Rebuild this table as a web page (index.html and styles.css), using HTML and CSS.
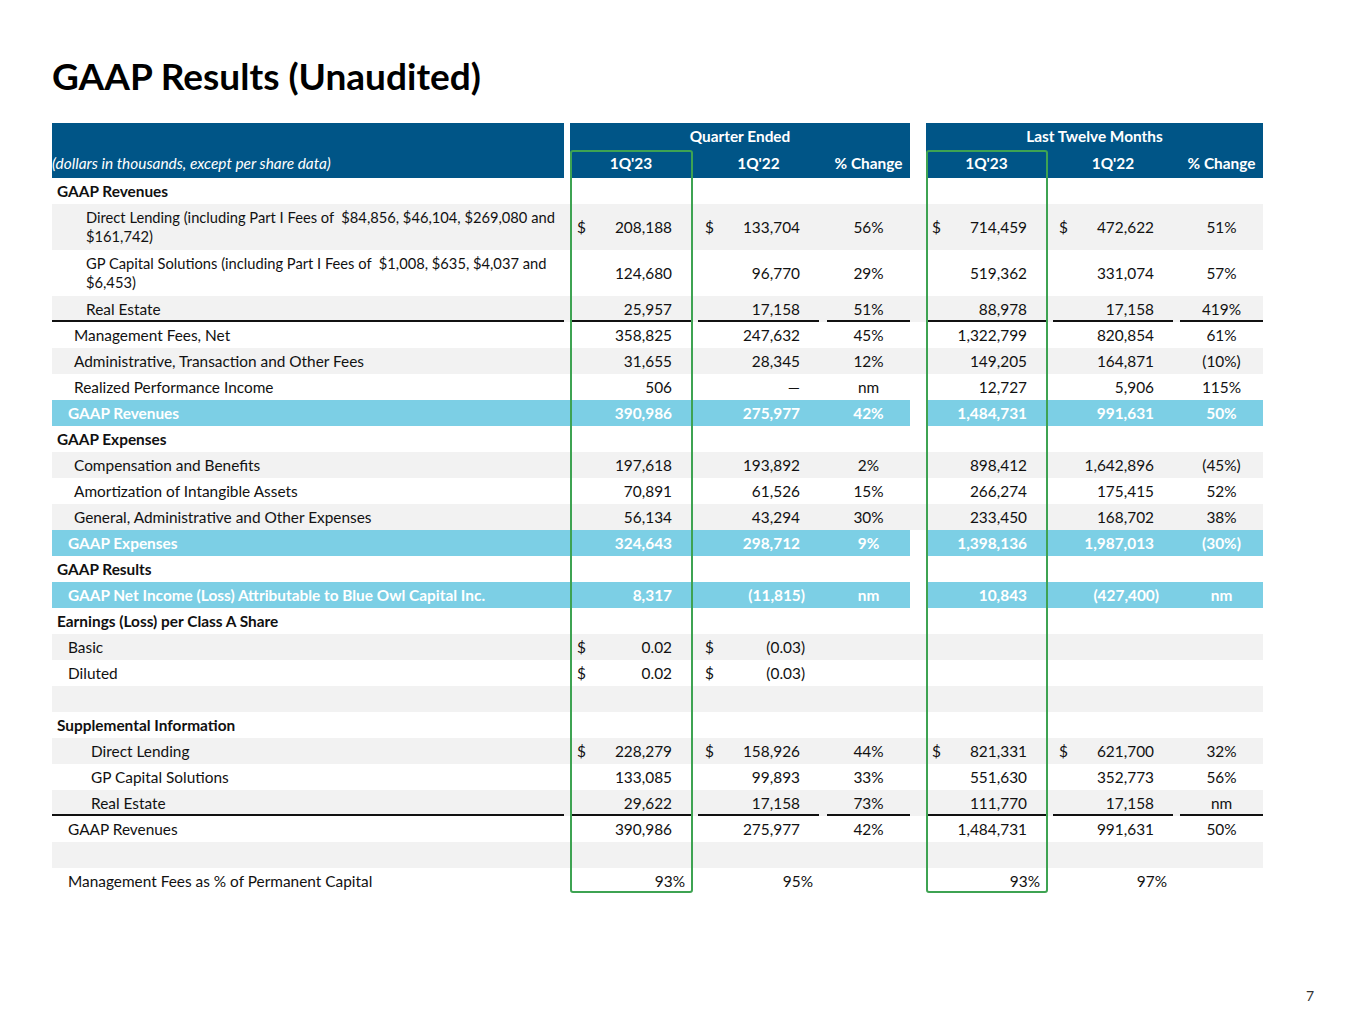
FILE: index.html
```html
<!DOCTYPE html>
<html lang="en">
<head>
<meta charset="utf-8">
<title>GAAP Results (Unaudited)</title>
<link rel="stylesheet" href="styles.css">
</head>
<body>
<div class="page">
  <h1 class="title">GAAP Results (Unaudited)</h1>

  <div class="tbl">
    <div class="head">
      <div class="h-lab">(dollars in thousands, except per share data)</div>
      <div class="h-grp q"></div>
      <div class="h-grp l"></div>
      <div class="h-title q">Quarter Ended</div>
      <div class="h-title l">Last Twelve Months</div>
      <div class="h-col a">1Q'23</div>
      <div class="h-col b">1Q'22</div>
      <div class="h-col c">% Change</div>
      <div class="h-col d">1Q'23</div>
      <div class="h-col e">1Q'22</div>
      <div class="h-col f">% Change</div>
    </div>

    <div class="row"><div class="lab sec">GAAP Revenues</div></div>

    <div class="row grey dbl">
      <div class="lab l2">Direct Lending (including Part I Fees of&nbsp; $84,856, $46,104, $269,080 and<br>$161,742)</div>
      <div class="v a"><span class="cur">$</span><span>208,188</span></div>
      <div class="v b"><span class="cur">$</span><span>133,704</span></div>
      <div class="v c">56%</div>
      <div class="v d"><span class="cur">$</span><span>714,459</span></div>
      <div class="v e"><span class="cur">$</span><span>472,622</span></div>
      <div class="v f">51%</div>
    </div>

    <div class="row dbl">
      <div class="lab l2">GP Capital Solutions (including Part I Fees of&nbsp; $1,008, $635, $4,037 and<br>$6,453)</div>
      <div class="v a"><span>124,680</span></div>
      <div class="v b"><span>96,770</span></div>
      <div class="v c">29%</div>
      <div class="v d"><span>519,362</span></div>
      <div class="v e"><span>331,074</span></div>
      <div class="v f">57%</div>
    </div>

    <div class="row grey ul">
      <div class="lab l2">Real Estate</div>
      <div class="v a"><span>25,957</span></div>
      <div class="v b"><span>17,158</span></div>
      <div class="v c">51%</div>
      <div class="v d"><span>88,978</span></div>
      <div class="v e"><span>17,158</span></div>
      <div class="v f">419%</div>
    </div>

    <div class="row">
      <div class="lab l1">Management Fees, Net</div>
      <div class="v a"><span>358,825</span></div>
      <div class="v b"><span>247,632</span></div>
      <div class="v c">45%</div>
      <div class="v d"><span>1,322,799</span></div>
      <div class="v e"><span>820,854</span></div>
      <div class="v f">61%</div>
    </div>

    <div class="row grey">
      <div class="lab l1">Administrative, Transaction and Other Fees</div>
      <div class="v a"><span>31,655</span></div>
      <div class="v b"><span>28,345</span></div>
      <div class="v c">12%</div>
      <div class="v d"><span>149,205</span></div>
      <div class="v e"><span>164,871</span></div>
      <div class="v f">(10%)</div>
    </div>

    <div class="row">
      <div class="lab l1">Realized Performance Income</div>
      <div class="v a"><span>506</span></div>
      <div class="v b"><span>—</span></div>
      <div class="v c">nm</div>
      <div class="v d"><span>12,727</span></div>
      <div class="v e"><span>5,906</span></div>
      <div class="v f">115%</div>
    </div>

    <div class="row hl">
      <div class="lab hi">GAAP Revenues</div>
      <div class="v a"><span>390,986</span></div>
      <div class="v b"><span>275,977</span></div>
      <div class="v c">42%</div>
      <div class="v d"><span>1,484,731</span></div>
      <div class="v e"><span>991,631</span></div>
      <div class="v f">50%</div>
    </div>

    <div class="row"><div class="lab sec">GAAP Expenses</div></div>

    <div class="row grey">
      <div class="lab l1">Compensation and Benefits</div>
      <div class="v a"><span>197,618</span></div>
      <div class="v b"><span>193,892</span></div>
      <div class="v c">2%</div>
      <div class="v d"><span>898,412</span></div>
      <div class="v e"><span>1,642,896</span></div>
      <div class="v f">(45%)</div>
    </div>

    <div class="row">
      <div class="lab l1">Amortization of Intangible Assets</div>
      <div class="v a"><span>70,891</span></div>
      <div class="v b"><span>61,526</span></div>
      <div class="v c">15%</div>
      <div class="v d"><span>266,274</span></div>
      <div class="v e"><span>175,415</span></div>
      <div class="v f">52%</div>
    </div>

    <div class="row grey">
      <div class="lab l1">General, Administrative and Other Expenses</div>
      <div class="v a"><span>56,134</span></div>
      <div class="v b"><span>43,294</span></div>
      <div class="v c">30%</div>
      <div class="v d"><span>233,450</span></div>
      <div class="v e"><span>168,702</span></div>
      <div class="v f">38%</div>
    </div>

    <div class="row hl">
      <div class="lab hi">GAAP Expenses</div>
      <div class="v a"><span>324,643</span></div>
      <div class="v b"><span>298,712</span></div>
      <div class="v c">9%</div>
      <div class="v d"><span>1,398,136</span></div>
      <div class="v e"><span>1,987,013</span></div>
      <div class="v f">(30%)</div>
    </div>

    <div class="row"><div class="lab sec">GAAP Results</div></div>

    <div class="row hl">
      <div class="lab hi">GAAP Net Income (Loss) Attributable to Blue Owl Capital Inc.</div>
      <div class="v a"><span>8,317</span></div>
      <div class="v b"><span class="neg">(11,815)</span></div>
      <div class="v c">nm</div>
      <div class="v d"><span>10,843</span></div>
      <div class="v e"><span class="neg">(427,400)</span></div>
      <div class="v f">nm</div>
    </div>

    <div class="row"><div class="lab sec">Earnings (Loss) per Class A Share</div></div>

    <div class="row grey">
      <div class="lab l0">Basic</div>
      <div class="v a"><span class="cur">$</span><span>0.02</span></div>
      <div class="v b"><span class="cur">$</span><span class="neg">(0.03)</span></div>
    </div>

    <div class="row">
      <div class="lab l0">Diluted</div>
      <div class="v a"><span class="cur">$</span><span>0.02</span></div>
      <div class="v b"><span class="cur">$</span><span class="neg">(0.03)</span></div>
    </div>

    <div class="row grey"></div>

    <div class="row"><div class="lab sec">Supplemental Information</div></div>

    <div class="row grey">
      <div class="lab l3">Direct Lending</div>
      <div class="v a"><span class="cur">$</span><span>228,279</span></div>
      <div class="v b"><span class="cur">$</span><span>158,926</span></div>
      <div class="v c">44%</div>
      <div class="v d"><span class="cur">$</span><span>821,331</span></div>
      <div class="v e"><span class="cur">$</span><span>621,700</span></div>
      <div class="v f">32%</div>
    </div>

    <div class="row">
      <div class="lab l3">GP Capital Solutions</div>
      <div class="v a"><span>133,085</span></div>
      <div class="v b"><span>99,893</span></div>
      <div class="v c">33%</div>
      <div class="v d"><span>551,630</span></div>
      <div class="v e"><span>352,773</span></div>
      <div class="v f">56%</div>
    </div>

    <div class="row grey ul">
      <div class="lab l3">Real Estate</div>
      <div class="v a"><span>29,622</span></div>
      <div class="v b"><span>17,158</span></div>
      <div class="v c">73%</div>
      <div class="v d"><span>111,770</span></div>
      <div class="v e"><span>17,158</span></div>
      <div class="v f">nm</div>
    </div>

    <div class="row">
      <div class="lab l0">GAAP Revenues</div>
      <div class="v a"><span>390,986</span></div>
      <div class="v b"><span>275,977</span></div>
      <div class="v c">42%</div>
      <div class="v d"><span>1,484,731</span></div>
      <div class="v e"><span>991,631</span></div>
      <div class="v f">50%</div>
    </div>

    <div class="row grey"></div>

    <div class="row pct">
      <div class="lab l0">Management Fees as % of Permanent Capital</div>
      <div class="v a"><span>93%</span></div>
      <div class="v b"><span>95%</span></div>
      <div class="v d"><span>93%</span></div>
      <div class="v e"><span>97%</span></div>
    </div>

    <div class="box box-q"></div>
    <div class="box box-l"></div>
  </div>

  <div class="footer">7</div>
</div>
</body>
</html>
```

FILE: styles.css
```css
* { box-sizing: border-box; }

html, body {
  margin: 0;
  padding: 0;
  background: #fff;
}

body {
  font-family: Lato, "Liberation Sans", sans-serif;
  font-size: 15.4px;
  color: #111;
}

.page {
  width: 1365px;
  height: 1024px;
  padding: 0 0 0 52px;
  display: flex;
  flex-direction: column;
}

.title {
  margin: 53px 0 0 0;
  font-size: 37px;
  line-height: 45px;
  font-weight: 700;
  color: #000;
}

.tbl {
  position: relative;
  width: 1211px;
  margin-top: 25px;
}

.head,
.row {
  display: grid;
  grid-template-columns: 512px 6px 122px 6px 121px 8px 83px 16px 121px 6px 120px 7px 83px;
}

.head {
  grid-template-rows: 27px 28px;
  color: #fff;
  font-weight: 700;
}

.h-lab {
  grid-column: 1;
  grid-row: 1 / 3;
  background: #005587;
  font-style: italic;
  font-weight: 400;
  display: flex;
  align-items: flex-end;
  padding: 0 0 6px 0;
  line-height: 18px;
}

.h-grp {
  grid-row: 1 / 3;
  background: #005587;
}
.h-grp.q { grid-column: 3 / 8; }
.h-grp.l { grid-column: 9 / 14; }

.h-title {
  grid-row: 1;
  text-align: center;
  line-height: 27px;
}
.h-title.q { grid-column: 3 / 8; }
.h-title.l { grid-column: 9 / 14; }

.h-col {
  grid-row: 2;
  text-align: center;
  line-height: 27px;
}

.a { grid-column: 3; }
.b { grid-column: 5; }
.c { grid-column: 7; }
.d { grid-column: 9; }
.e { grid-column: 11; }
.f { grid-column: 13; }

.row {
  height: 26px;
  align-items: center;
  line-height: 19px;
}
.row.dbl { height: 46px; }
.row.dbl .lab { font-size: 14.7px; }
.row.grey { background: #f2f2f2; }
.row.hl {
  background: linear-gradient(to right, #7ccfe5 0, #7ccfe5 858px, #fff 858px, #fff 874px, #7ccfe5 874px, #7ccfe5 100%);
  color: #fff;
  font-weight: 700;
}

.lab {
  grid-column: 1;
  white-space: nowrap;
}
.lab.sec { padding-left: 5px; font-weight: 700; }
.lab.hi { padding-left: 16px; }
.lab.l0 { padding-left: 16px; }
.lab.l1 { padding-left: 22px; }
.lab.l2 { padding-left: 34px; }
.lab.l3 { padding-left: 39px; }

.v {
  display: flex;
  justify-content: flex-end;
  align-self: stretch;
  align-items: center;
  padding-left: 7px;
  padding-right: 20px;
  white-space: nowrap;
}
.v.b, .v.e { padding-right: 19px; }
.v.d, .v.e { padding-left: 6px; }
.v.c, .v.f {
  justify-content: center;
  padding: 0;
}
.cur { margin-right: auto; }
.neg { margin-right: -5px; }

.row.pct .v { padding-right: 7px; }
.row.pct .v.b, .row.pct .v.e { padding-right: 6px; }

.row.ul .lab,
.row.ul .v {
  align-self: stretch;
  display: flex;
  align-items: center;
  box-shadow: inset 0 -2px 0 #111;
}

.box {
  position: absolute;
  top: 27px;
  height: 743px;
  border: 2px solid #3ea352;
  border-radius: 3px;
  pointer-events: none;
}
.box-q { left: 518px; width: 123px; }
.box-l { left: 874px; width: 122px; }

.footer {
  margin-top: auto;
  margin-bottom: 20px;
  align-self: flex-end;
  margin-right: 51px;
  font-size: 14px;
  color: #333;
}
```
